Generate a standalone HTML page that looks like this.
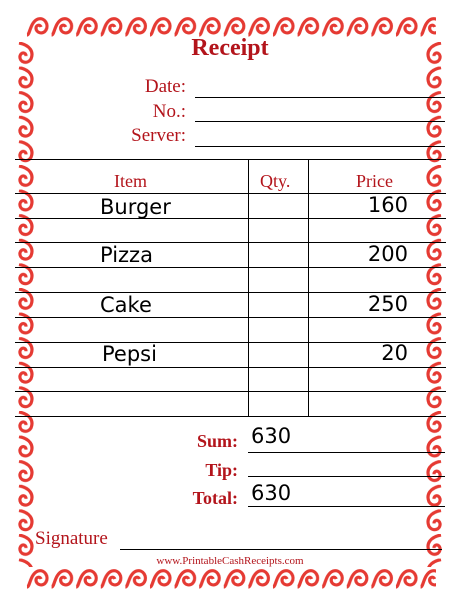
<!DOCTYPE html>
<html><head><style>
body{margin:0;width:460px;height:610px;background:#fff;position:relative;overflow:hidden;font-family:"Liberation Serif",serif}
.a{position:absolute}
.r{color:#b3141b}
.l{position:absolute;height:1px;background:#000}
.v{position:absolute;width:1px;background:#000}
.h{font-family:"Comic Sans MS","DejaVu Sans",sans-serif;font-size:21px;color:#000}
</style></head><body>
<svg class="a" style="left:0;top:0" width="460" height="610">
<defs>
<pattern id="ph" x="26" y="15" width="24.6" height="26" patternUnits="userSpaceOnUse">
<path d="M1,20 C4,20 4,7 12,4 C19,2 23,10 20,15 C17,20 10,18 10,13 C10,10 14,9 15,12" fill="none" stroke="#e53a33" stroke-width="3.2"/>
</pattern>
<pattern id="pb" x="26" y="567" width="24.6" height="26" patternUnits="userSpaceOnUse">
<path d="M1,20 C4,20 4,7 12,4 C19,2 23,10 20,15 C17,20 10,18 10,13 C10,10 14,9 15,12" fill="none" stroke="#e53a33" stroke-width="3.2"/>
</pattern>
<pattern id="pv" x="11" y="42" width="26" height="24.6" patternUnits="userSpaceOnUse">
<path d="M8,1 C19,3 23,10 20,17 C16,23 8,20 9,14 C10,10 15,10 15,14" fill="none" stroke="#e53a33" stroke-width="3.2"/>
</pattern>
<pattern id="pr" x="423" y="42" width="26" height="24.6" patternUnits="userSpaceOnUse">
<path d="M18,1 C7,3 3,10 6,17 C10,23 18,20 17,14 C16,10 11,10 11,14" fill="none" stroke="#e53a33" stroke-width="3.2"/>
</pattern>
</defs>
<rect x="26" y="15" width="410" height="26" fill="url(#ph)"/>
<rect x="26" y="567" width="410" height="26" fill="url(#pb)"/>
<rect x="11" y="42" width="26" height="525" fill="url(#pv)"/>
<rect x="423" y="42" width="26" height="525" fill="url(#pr)"/>
</svg>
<div class="a r" style="left:0;width:460px;top:35px;text-align:center;font-weight:bold;font-size:24px">Receipt</div>
<div class="a r" style="right:274px;top:75px;font-size:19px;text-align:right;line-height:24.5px">Date:<br>No.:<br>Server:</div>
<div class="l" style="left:195px;width:250px;top:97px"></div>
<div class="l" style="left:195px;width:250px;top:121px"></div>
<div class="l" style="left:195px;width:250px;top:146px"></div>
<div class="l" style="left:15px;width:431px;top:159px"></div>
<div class="l" style="left:15px;width:431px;top:193px"></div>
<div class="l" style="left:15px;width:431px;top:218px"></div>
<div class="l" style="left:15px;width:431px;top:242px"></div>
<div class="l" style="left:15px;width:431px;top:267px"></div>
<div class="l" style="left:15px;width:431px;top:292px"></div>
<div class="l" style="left:15px;width:431px;top:317px"></div>
<div class="l" style="left:15px;width:431px;top:342px"></div>
<div class="l" style="left:15px;width:431px;top:367px"></div>
<div class="l" style="left:15px;width:431px;top:391px"></div>
<div class="l" style="left:15px;width:431px;top:416px"></div>
<div class="v" style="left:248px;top:159px;height:257px"></div>
<div class="v" style="left:308px;top:159px;height:257px"></div>
<div class="a r" style="left:114px;top:171px;font-size:18px">Item</div>
<div class="a r" style="left:260px;top:171px;font-size:18px">Qty.</div>
<div class="a r" style="left:356px;top:171px;font-size:18px">Price</div>
<div class="a h" style="left:100px;top:195px">Burger</div>
<div class="a h" style="left:100px;top:243px">Pizza</div>
<div class="a h" style="left:100px;top:293px">Cake</div>
<div class="a h" style="left:102px;top:342px">Pepsi</div>
<div class="a h" style="right:52px;top:193px">160</div>
<div class="a h" style="right:52px;top:242px">200</div>
<div class="a h" style="right:52px;top:292px">250</div>
<div class="a h" style="right:52px;top:341px">20</div>
<div class="a r" style="right:222px;top:427px;font-size:18px;font-weight:bold;text-align:right;line-height:28.5px">Sum:<br>Tip:<br>Total:</div>
<div class="a h" style="left:251px;top:424px">630</div>
<div class="a h" style="left:251px;top:481px">630</div>
<div class="l" style="left:248px;width:197px;top:452px"></div>
<div class="l" style="left:248px;width:197px;top:476px"></div>
<div class="l" style="left:248px;width:197px;top:506px"></div>
<div class="a r" style="left:35px;top:528px;font-size:19px">Signature</div>
<div class="l" style="left:120px;width:322px;top:549px"></div>
<div class="a r" style="left:0;width:460px;text-align:center;top:555px;font-size:11px">www.PrintableCashReceipts.com</div>
</body></html>
